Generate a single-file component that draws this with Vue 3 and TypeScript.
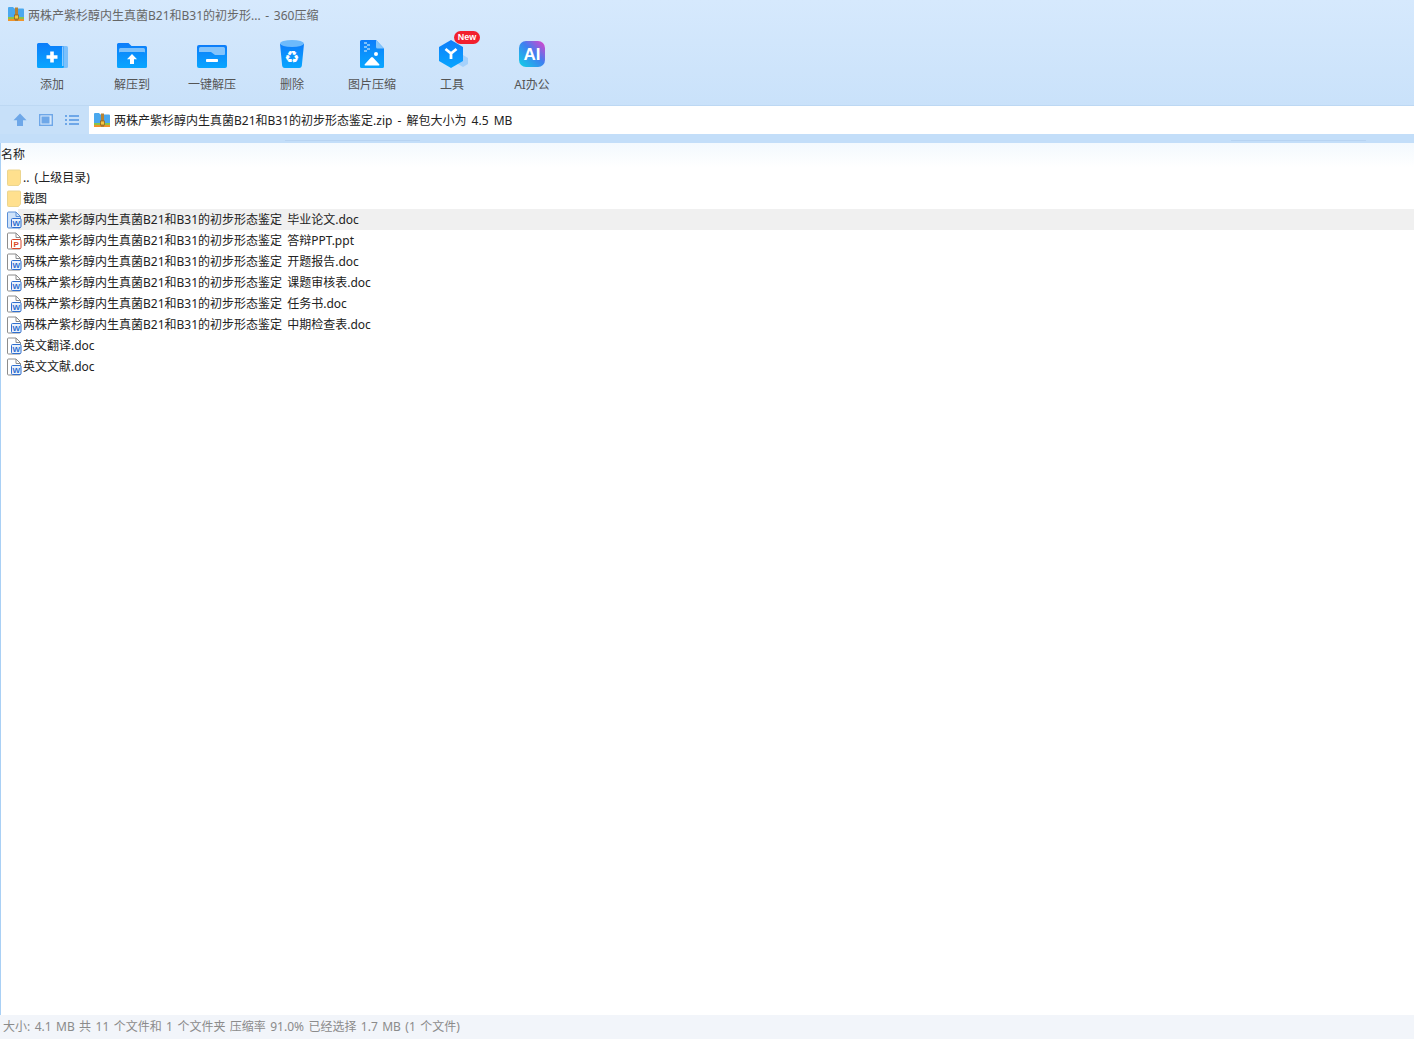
<script setup lang="ts">
interface Tool { label: string; kind: string }
const tools: Tool[] = [
  { label: '添加', kind: 'add' },
  { label: '解压到', kind: 'to' },
  { label: '一键解压', kind: 'one' },
  { label: '删除', kind: 'del' },
  { label: '图片压缩', kind: 'img' },
  { label: '工具', kind: 'tool' },
  { label: 'AI办公', kind: 'ai' },
]
const P = '两株产紫杉醇内生真菌B21和B31的初步形态鉴定'
const rows = [
  { name: '.. (上级目录)', type: 'folder' },
  { name: '截图', type: 'folder' },
  { name: P + ' 毕业论文.doc', type: 'word', active: true },
  { name: P + ' 答辩PPT.ppt', type: 'ppt' },
  { name: P + ' 开题报告.doc', type: 'word' },
  { name: P + ' 课题审核表.doc', type: 'word' },
  { name: P + ' 任务书.doc', type: 'word' },
  { name: P + ' 中期检查表.doc', type: 'word' },
  { name: '英文翻译.doc', type: 'word' },
  { name: '英文文献.doc', type: 'word' },
]
</script>

<template>
  <div class="app">
    <header class="top">
      <div class="titlebar">
        <svg width="16" height="16" viewBox="0 0 16 16">
          <path d="M0 1a1 1 0 0 1 1-1h4l1.500 1.500H15a1 1 0 0 1 1 1V10H0z" fill="#4aa8ee" />
          <rect y="10" width="16" height="2" fill="#8bc34a" />
          <rect y="12" width="16" height="2" fill="#f0932b" />
          <rect x="7" y="0.500" width="3" height="13.500" fill="#b58235" />
          <rect x="6.500" y="8" width="4" height="4" fill="#f5c542" stroke="#8a5a1a" stroke-width=".7" />
        </svg>
        <span class="txt">两株产紫杉醇内生真菌B21和B31的初步形... - 360压缩</span>
      </div>
      <div class="toolbar">
        <div v-for="t in tools" :key="t.kind" class="tool">
          <div class="ico">
            <svg v-if="t.kind === 'add'" width="32" height="32" viewBox="0 0 32 32">
              <path d="M27 7h3.500A1.500 1.500 0 0 1 32 8.500V27.500a1.500 1.500 0 0 1-1.500 1.500H26z" fill="#7cc0fb" />
              <path d="M1 5.500A1.500 1.500 0 0 1 2.500 4h9l3 3H26.500A1.500 1.500 0 0 1 28 8.500V27.500a1.500 1.500 0 0 1-1.500 1.500H2.500A1.500 1.500 0 0 1 1 27.500z" fill="url(#gb)" />
              <path d="M26 7.500h1.500V27H26z" fill="#8ccbff" />
              <path d="M14.200 12.500h3.600v3.700h3.700v3.600h-3.700v3.700h-3.600v-3.700h-3.700v-3.600h3.700z" fill="#fff" />
            </svg>
            <svg v-else-if="t.kind === 'to'" width="32" height="32" viewBox="0 0 32 32">
              <path d="M1 5.500A1.500 1.500 0 0 1 2.500 4h10l3 3h14A1.500 1.500 0 0 1 31 8.500V27.500a1.500 1.500 0 0 1-1.500 1.500H2.500A1.500 1.500 0 0 1 1 27.500z" fill="url(#gb)" />
              <path d="M3 14V10.500A1.500 1.500 0 0 1 4.500 9h23A1.500 1.500 0 0 1 29 10.500V14a1 1 0 0 0-1-1H4a1 1 0 0 0-1 1z" fill="#7dc1fb" />
              <path d="M16 15l5 5.300h-3V25h-4v-4.700h-3z" fill="#fff" />
            </svg>
            <svg v-else-if="t.kind === 'one'" width="32" height="32" viewBox="0 0 32 32">
              <rect x="1" y="6" width="30" height="23" rx="2" fill="url(#gb)" />
              <path d="M3 9.500A1.500 1.500 0 0 1 4.500 8h23A1.500 1.500 0 0 1 29 9.500V15a1 1 0 0 1-1 1H19l-4-3H3z" fill="#84c4fb" />
              <rect x="10" y="20" width="12" height="3" rx=".8" fill="#fff" />
            </svg>
            <svg v-else-if="t.kind === 'del'" width="32" height="32" viewBox="0 0 32 32">
              <path d="M4 5h24l-2.200 22a2.500 2.500 0 0 1-2.500 2H8.700a2.500 2.500 0 0 1-2.500-2z" fill="url(#gb)" />
              <ellipse cx="16" cy="4.500" rx="12" ry="3.500" fill="#6dbafc" />
              <text x="16" y="24" text-anchor="middle" class="recycle">♻</text>
            </svg>
            <svg v-else-if="t.kind === 'img'" width="32" height="32" viewBox="0 0 32 32">
              <path d="M5.500 1H20L28 9.500V27.500A1.500 1.500 0 0 1 26.500 29H5.500A1.500 1.500 0 0 1 4 27.500V2.500A1.500 1.500 0 0 1 5.500 1z" fill="url(#gb)" />
              <path d="M20 1L28 9.500H21.500A1.500 1.500 0 0 1 20 8z" fill="#87c6fb" />
              <path d="M8 3h3v2H8zm3 2h3v2h-3zM8 7h3v2H8zm3 2h3v2h-3zM8 11h3v2H8z" fill="#7dc1fb" />
              <circle cx="20" cy="15" r="2" fill="#fff" />
              <path d="M15 18.500a1.300 1.300 0 0 1 2 0L23 25a.8.800 0 0 1-.5 1.500H9.500A.8.800 0 0 1 9 25z" fill="#fff" />
            </svg>
            <svg v-else-if="t.kind === 'tool'" width="32" height="32" viewBox="0 0 32 32">
              <path d="M27 16l5 3v6l-5 3-5-3v-6z" fill="#a5d1fb" />
              <path d="M15 1l12 7v14l-12 7-12-7V8z" fill="url(#gb)" />
              <path d="M9.500 10L15 14.500 20.500 10M15 14.500V20" fill="none" stroke="#fff" stroke-width="2.800" />
            </svg>
            <svg v-else width="32" height="32" viewBox="0 0 32 32">
              <rect x="3" y="2" width="26" height="26" rx="7" fill="url(#ga)" />
              <text x="16" y="21" text-anchor="middle" class="aitext">AI</text>
            </svg>
            <span v-if="t.kind === 'tool'" class="badge">New</span>
          </div>
          <div class="lbl">{{ t.label }}</div>
        </div>
      </div>
      <div class="addrbar">
        <div class="navs">
          <svg width="16" height="16" viewBox="0 0 16 16"><path d="M8 1.500l6.500 6.700H11V14H5V8.200H1.500z" fill="#6ea7e8" /></svg>
          <svg width="16" height="16" viewBox="0 0 16 16">
            <rect x="1.700" y="2.700" width="12.600" height="10.600" fill="#d5e7fb" stroke="#6ea7e8" stroke-width="1.400" />
            <rect x="3.500" y="4.500" width="8" height="7" fill="#6ea7e8" />
          </svg>
          <svg width="16" height="16" viewBox="0 0 16 16">
            <path d="M1 3h2v2H1zm0 4h2v2H1zm0 4h2v2H1z" fill="#6ea7e8" />
            <path d="M5 3h10v2H5zm0 4h10v2H5zm0 4h10v2H5z" fill="#6ea7e8" />
          </svg>
        </div>
        <div class="addr">
          <svg width="16" height="16" viewBox="0 0 16 16">
            <path d="M0 2a1 1 0 0 1 1-1h4l1.500 1.500H15a1 1 0 0 1 1 1V11H0z" fill="#4aa8ee" />
            <rect y="11" width="16" height="2" fill="#8bc34a" />
            <rect y="13" width="16" height="2" fill="#f0932b" />
            <rect x="7" y="1.500" width="3" height="13.500" fill="#b58235" />
            <rect x="6.500" y="9" width="4" height="4" fill="#f5c542" stroke="#8a5a1a" stroke-width=".7" />
          </svg>
          <span class="txt">两株产紫杉醇内生真菌B21和B31的初步形态鉴定.zip - 解包大小为 4.5 MB</span>
        </div>
        <i class="grip grip-a"></i>
        <i class="grip grip-b"></i>
      </div>
    </header>
    <main class="list">
      <div class="colhead">名称</div>
      <div v-for="r in rows" :key="r.name" class="row" :class="{ active: r.active }">
        <svg v-if="r.type === 'folder'" width="16" height="18" viewBox="0 0 16 18">
          <path d="M2.500 1h11a1 1 0 0 1 1 1v12l-2 2.500h-10a1 1 0 0 1-1-1V2a1 1 0 0 1 1-1z" fill="#ffe08e" stroke="#ecd58e" />
        </svg>
        <svg v-else width="16" height="18" viewBox="0 0 16 18">
          <path d="M2.500 1H10L14.500 5.500V16a1 1 0 0 1-1 1h-11a1 1 0 0 1-1-1V2a1 1 0 0 1 1-1z" :fill="r.active ? '#cfe3fa' : '#fff'" :stroke="r.active ? '#5a8fd6' : '#8c8c8c'" />
          <path d="M10 1V5.500h4.500" fill="none" :stroke="r.active ? '#5a8fd6' : '#8c8c8c'" />
          <rect x="5.500" y="7.500" width="9.500" height="9" rx="1" :fill="r.type === 'ppt' ? '#fff' : '#eaf2fc'" :stroke="r.type === 'ppt' ? '#d9492c' : '#2f6fd0'" />
          <text x="10.200" y="15" text-anchor="middle" class="ft" :fill="r.type === 'ppt' ? '#d9492c' : '#2f6fd0'">{{ r.type === 'ppt' ? 'P' : 'W' }}</text>
        </svg>
        <span class="name">{{ r.name }}</span>
      </div>
    </main>
    <footer class="status">大小: 4.1 MB 共 11 个文件和 1 个文件夹 压缩率 91.0% 已经选择 1.7 MB (1 个文件)</footer>
    <svg width="0" height="0" class="defs">
      <defs>
        <linearGradient id="gb" x1="0" y1="0" x2="0" y2="1"><stop offset="0" stop-color="#0d7dfa" /><stop offset="1" stop-color="#08a6ff" /></linearGradient>
        <linearGradient id="ga" x1="0" y1="1" x2="1" y2="0"><stop offset="0" stop-color="#0fd3e6" /><stop offset=".55" stop-color="#3f7ff0" /><stop offset="1" stop-color="#e93fc8" /></linearGradient>
      </defs>
    </svg>
  </div>
</template>

<style>
html, body { margin: 0; background: #fff; }
</style>

<style scoped>
.app {
  width: 1414px;
  height: 1039px;
  display: flex;
  flex-direction: column;
  font-family: "Noto Sans", "Noto Sans CJK SC", sans-serif;
  font-size: 12px;
  color: #222;
  overflow: hidden;
  position: relative;
}
.defs { position: absolute; }
.top {
  height: 143px;
  flex: none;
  background: linear-gradient(#d6e9fd, #c5dff9);
  display: flex;
  flex-direction: column;
}
.titlebar {
  height: 30px;
  display: flex;
  align-items: center;
  gap: 4px;
  padding-left: 8px;
  color: #666;
  line-height: 16px;
  word-spacing: 1.500px;
}
.txt { padding-top: 2px; }
.toolbar {
  height: 75px;
  display: flex;
  padding-left: 12px;
}
.tool {
  width: 80px;
  display: flex;
  flex-direction: column;
  align-items: center;
}
.ico {
  position: relative;
  width: 32px;
  height: 32px;
  margin-top: 9px;
}
.badge {
  position: absolute;
  left: 18px;
  top: -8px;
  width: 26px;
  height: 13px;
  border-radius: 7px;
  background: #f2202e;
  color: #fff;
  font: 700 9px/13px "Liberation Sans", sans-serif;
  text-align: center;
}
.lbl {
  margin-top: 6px;
  line-height: 16px;
  color: #555;
}
.aitext {
  font: 700 17px "Liberation Sans", sans-serif;
  fill: #fff;
}
.recycle {
  font: 17px "DejaVu Sans", sans-serif;
  fill: #fff;
}
.addrbar {
  position: relative;
  height: 28px;
  display: flex;
  align-items: stretch;
  border-top: 1px solid #bdd8f3;
  padding-bottom: 9px;
  background: #c3def9;
}
.navs {
  width: 89px;
  display: flex;
  align-items: center;
  gap: 10px;
  padding-left: 12px;
  box-sizing: border-box;
  background: #c7e0f9;
}
.addr {
  flex: 1;
  display: flex;
  align-items: center;
  gap: 4px;
  padding-left: 5px;
  background: #fff;
  line-height: 16px;
  word-spacing: 2px;
}
.grip {
  position: absolute;
  top: 34px;
  height: 1px;
  width: 135px;
  background: #b6d3f2;
}
.grip-a { left: 285px; }
.grip-b { left: 1231px; }
.list {
  flex: 1;
  border-left: 1px solid #a9d0f5;
  background: linear-gradient(#f3f9fe, #fff 24px);
  display: flex;
  flex-direction: column;
  min-height: 0;
}
.colhead {
  height: 24px;
  line-height: 24px;
}
.row {
  height: 21px;
  display: flex;
  align-items: center;
  padding-left: 5px;
  gap: 1px;
  line-height: 16px;
  flex: none;
  word-spacing: 2px;
}
.row.active { background: linear-gradient(90deg, #fff 17px, #f0f0f0 17px); }
.ft { font: 700 8px "Liberation Sans", sans-serif; }
.status {
  height: 24px;
  flex: none;
  background: #f2f5fa;
  color: #8b8b8b;
  padding-left: 3px;
  line-height: 24px;
  word-spacing: 1.300px;
}
</style>
